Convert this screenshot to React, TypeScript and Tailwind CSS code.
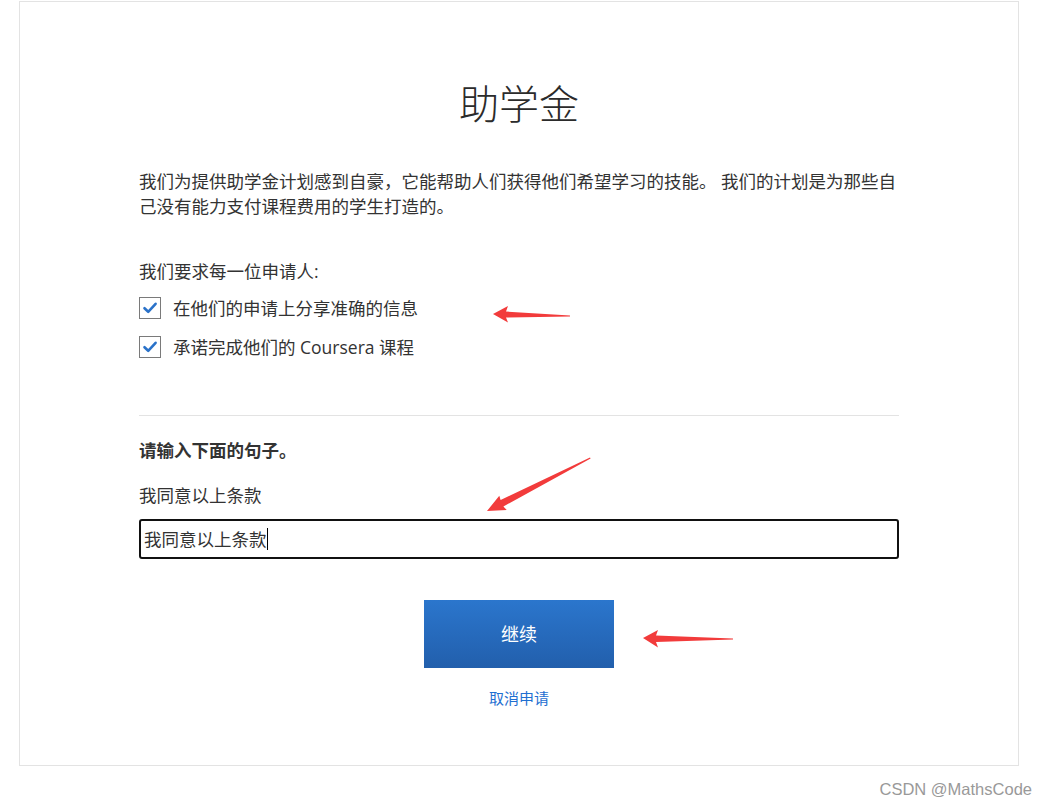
import React from "react";

const font = '"Open Sans", "Noto Sans CJK SC", sans-serif';

function Check() {
  return (
    <div className="w-[22px] h-[22px] border-[1.5px] border-[#7a7a7a] bg-white flex items-center justify-center shrink-0">
      <svg width="16" height="16" viewBox="0 0 16 16">
        <path d="M2.5 8.2 L6.2 11.8 L13.6 3.8" fill="none" stroke="#2a72c9" strokeWidth="2.6" strokeLinecap="round" strokeLinejoin="round" />
      </svg>
    </div>
  );
}

export default function App() {
  return (
    <div className="relative w-[1047px] h-[805px] bg-white" style={{ fontFamily: font }}>
      <div className="ml-[19px] mt-[1px] w-[1000px] border border-[#e3e3e3] pt-[80px] pb-[57px] px-[119px] text-[#333]">
        <h1 className="text-center text-[40px] leading-[40px] font-light text-[#2b2b2b]" style={{ fontFamily: '"Noto Sans CJK SC", serif' }}>
          助学金
        </h1>
        <p className="mt-[47px] text-[17.5px] leading-[25px]">
          我们为提供助学金计划感到自豪，它能帮助人们获得他们希望学习的技能。 我们的计划是为那些自己没有能力支付课程费用的学生打造的。
        </p>
        <p className="mt-[40px] text-[17.5px] leading-[25px]">我们要求每一位申请人:</p>
        <div className="mt-[13px] flex items-center gap-[12px] h-[22px]">
          <Check />
          <span className="text-[17.5px] leading-[25px]">在他们的申请上分享准确的信息</span>
        </div>
        <div className="mt-[17px] flex items-center gap-[12px] h-[22px]">
          <Check />
          <span className="text-[17.5px] leading-[25px]">承诺完成他们的 Coursera 课程</span>
        </div>
        <div className="mt-[57px] h-px bg-[#e3e3e3]" />
        <p className="mt-[22px] text-[17.5px] leading-[25px] font-bold">请输入下面的句子。</p>
        <p className="mt-[20px] text-[17.5px] leading-[25px]">我同意以上条款</p>
        <div className="mt-[11px] h-[40px] border-2 border-[#111] rounded-[3px] flex items-center pl-[3px]">
          <span className="text-[17.5px] leading-[25px]">我同意以上条款</span>
          <span className="w-px h-[22px] bg-black" />
        </div>
        <div className="mt-[41px] flex justify-center">
          <button className="w-[190px] h-[68px] bg-gradient-to-b from-[#2b76cd] to-[#225fac] text-white text-[18px]">
            继续
          </button>
        </div>
        <div className="mt-[20px] flex justify-center">
          <span className="text-[15px] leading-[20px] text-[#1f6fd1]">取消申请</span>
        </div>
      </div>
      <div className="absolute right-[15px] top-[777px] text-[16.5px] leading-[22px] text-[#999]" style={{ fontFamily: '"Liberation Sans", sans-serif' }}>
        CSDN @MathsCode
      </div>
      <svg className="absolute left-0 top-0 pointer-events-none" width="1047" height="805">
        <polygon fill="#f23b3b" points="493,313 508,305 506,310.5 570,314.5 570,315.5 506,316.5 508,321.5" />
        <polygon fill="#f23b3b" points="643,637 658,629 656,634.5 733,637.5 733,638.5 656,641 658,646.5" />
        <polygon fill="#f23b3b" points="487,510 499.3,494.7 500.6,499 590,456.5 590.6,457.6 503.4,505.5 506.7,508.9" />
      </svg>
    </div>
  );
}
